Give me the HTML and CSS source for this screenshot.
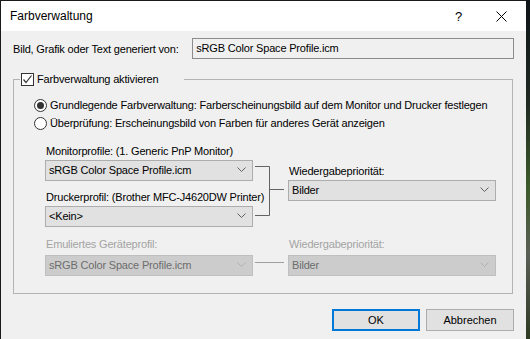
FILE: index.html
```html
<!DOCTYPE html>
<html lang="de">
<head>
  <meta charset="UTF-8" />
  <title>Farbverwaltung</title>
  <link rel="stylesheet" href="styles.css">
</head>
<body>
  <div class="dialog">
    <div class="titlebar">
      <span class="title">Farbverwaltung</span>
      <span class="help">?</span>
      <span class="close">
        <svg width="11" height="11" viewBox="0 0 11 11"><path d="M0.5 0.5 L10.5 10.5 M10.5 0.5 L0.5 10.5" stroke="#000" stroke-width="1" fill="none"/></svg>
      </span>
    </div>
    <div class="content">
      <div class="source-row">
        <span class="source-label">Bild, Grafik oder Text generiert von:</span>
        <div class="textbox">sRGB Color Space Profile.icm</div>
      </div>

      <fieldset class="group">
        <legend>
          <span class="checkbox">
            <svg width="11" height="11" viewBox="0 0 11 11"><path d="M1.5 5.5 L4 8.5 L9.5 1.5" stroke="#333" stroke-width="1.2" fill="none"/></svg>
          </span>
          Farbverwaltung aktivieren
        </legend>
        <div class="group-body">
          <div class="radio-row"><span class="radio checked"></span>Grundlegende Farbverwaltung: Farberscheinungsbild auf dem Monitor und Drucker festlegen</div>
          <div class="radio-row"><span class="radio"></span>Überprüfung: Erscheinungsbild von Farben für anderes Gerät anzeigen</div>

          <div class="profiles">
            <div class="col">
              <div class="field-label">Monitorprofile: (1. Generic PnP Monitor)</div>
              <div class="combo">sRGB Color Space Profile.icm<svg class="chev" width="9" height="5" viewBox="0 0 9 5"><path d="M0.5 0.5 L4.5 4.5 L8.5 0.5" stroke="#606060" fill="none"/></svg></div>
              <div class="field-label second">Druckerprofil: (Brother MFC-J4620DW Printer)</div>
              <div class="combo">&lt;Kein&gt;<svg class="chev" width="9" height="5" viewBox="0 0 9 5"><path d="M0.5 0.5 L4.5 4.5 L8.5 0.5" stroke="#606060" fill="none"/></svg></div>
            </div>
            <div class="bracket">
              <svg width="35" height="84" viewBox="0 0 35 84"><path d="M2 22.5 H16.5 V71.5 H2 M16.5 45.5 H31" stroke="#646464" fill="none"/></svg>
            </div>
            <div class="col right-top">
              <div class="field-label">Wiedergabepriorität:</div>
              <div class="combo">Bilder<svg class="chev" width="9" height="5" viewBox="0 0 9 5"><path d="M0.5 0.5 L4.5 4.5 L8.5 0.5" stroke="#606060" fill="none"/></svg></div>
            </div>

            <div class="col disabled">
              <div class="field-label">Emuliertes Geräteprofil:</div>
              <div class="combo">sRGB Color Space Profile.icm<svg class="chev" width="9" height="5" viewBox="0 0 9 5"><path d="M0.5 0.5 L4.5 4.5 L8.5 0.5" stroke="#b0b0b0" fill="none"/></svg></div>
            </div>
            <div class="link-line"></div>
            <div class="col disabled">
              <div class="field-label">Wiedergabepriorität:</div>
              <div class="combo">Bilder<svg class="chev" width="9" height="5" viewBox="0 0 9 5"><path d="M0.5 0.5 L4.5 4.5 L8.5 0.5" stroke="#b0b0b0" fill="none"/></svg></div>
            </div>
          </div>
        </div>
      </fieldset>

      <div class="buttons">
        <button class="btn default">OK</button>
        <button class="btn">Abbrechen</button>
      </div>
    </div>
  </div>
</body>
</html>
```

FILE: styles.css
```css
body {
  margin: 0;
  width: 530px;
  height: 339px;
  overflow: hidden;
  display: flex;
  background: linear-gradient(180deg, #0f1418 0%, #1f2a22 30%, #3c5a2a 55%, #5a5f55 75%, #2e3a22 100%);
  font-family: 'Liberation Sans', Arial, sans-serif;
  font-size: 11px;
  letter-spacing: -0.18px;
  color: #000;
}
.dialog {
  width: 525px;
  height: 338px;
  flex-shrink: 0;
  background-color: #f0f0f0;
  border-left: 1px solid #1a1a1a;
  border-top: 1px solid #1a1a1a;
}
.titlebar {
  height: 30px;
  background-color: #fff;
  display: flex;
  align-items: center;
  padding-left: 9px;
  font-size: 12px;
  letter-spacing: 0;
}
.title {
  flex: 1;
}
.help {
  width: 14px;
  font-size: 13px;
  margin-right: 27px;
}
.close {
  display: flex;
  margin-right: 19px;
}
.content {
  padding: 0 12px 0 12px;
}
.source-row {
  display: flex;
  align-items: center;
  margin-top: 7px;
  height: 21px;
}
.source-label {
  width: 180px;
}
.textbox {
  width: 318px;
  height: 19px;
  line-height: 19px;
  border: 1px solid #8c8c8c;
  padding-left: 3px;
  box-sizing: content-box;
}
.group {
  margin: 13px 0 0 0;
  padding: 0;
  border: 1px solid #b4b4b4;
  width: 498px;
  min-width: 0;
}
.group legend {
  display: flex;
  align-items: center;
  margin-left: 6px;
  padding: 0 26px 0 1px;
  line-height: 15px;
}
.checkbox {
  width: 11px;
  height: 11px;
  border: 1px solid #333;
  background-color: #fff;
  margin-right: 3px;
  display: flex;
}
.group-body {
  padding: 9px 0 17px 20px;
}
.radio-row {
  display: flex;
  align-items: center;
  height: 18px;
  white-space: nowrap;
}
.radio {
  width: 11px;
  height: 11px;
  border: 1px solid #333;
  border-radius: 50%;
  background-color: #fff;
  margin-right: 3px;
  position: relative;
}
.radio.checked::after {
  content: "";
  position: absolute;
  left: 2px;
  top: 2px;
  width: 7px;
  height: 7px;
  border-radius: 50%;
  background-color: #333;
}
.profiles {
  display: grid;
  grid-template-columns: 208px 35px 208px;
  margin: 12px 0 0 11px;
}
.col {
  display: flex;
  flex-direction: column;
  min-width: 0;
}
.field-label {
  line-height: 15px;
  padding-left: 1px;
  margin-bottom: 1px;
  white-space: nowrap;
}
.field-label.second {
  margin-top: 9px;
}
.combo {
  height: 19px;
  line-height: 19px;
  border: 1px solid #adadad;
  background-color: #e1e1e1;
  padding: 0 6px 0 3px;
  display: flex;
  justify-content: space-between;
  align-items: center;
}
.chev {
  margin-top: -2px;
}
.bracket {
  display: flex;
}
.right-top {
  margin-top: 20px;
}
.disabled {
  margin-top: 9px;
}
.disabled .field-label {
  color: #a3a3a3;
  margin-bottom: 3px;
}
.disabled .combo {
  background-color: #cccccc;
  border-color: #bfbfbf;
  color: #6d6d6d;
}
.link-line {
  border-bottom: 1px solid #a0a0a0;
  margin: 0 4px 13px 2px;
  align-self: end;
}
.buttons {
  display: flex;
  justify-content: flex-end;
  gap: 6px;
  margin-top: 15px;
}
.btn {
  width: 88px;
  height: 22px;
  font-family: 'Liberation Sans', Arial, sans-serif;
  font-size: 11px;
  color: #000;
  background-color: #e1e1e1;
  border: 1px solid #adadad;
  padding: 0;
}
.btn.default {
  border: 2px solid #0078d7;
}
```
